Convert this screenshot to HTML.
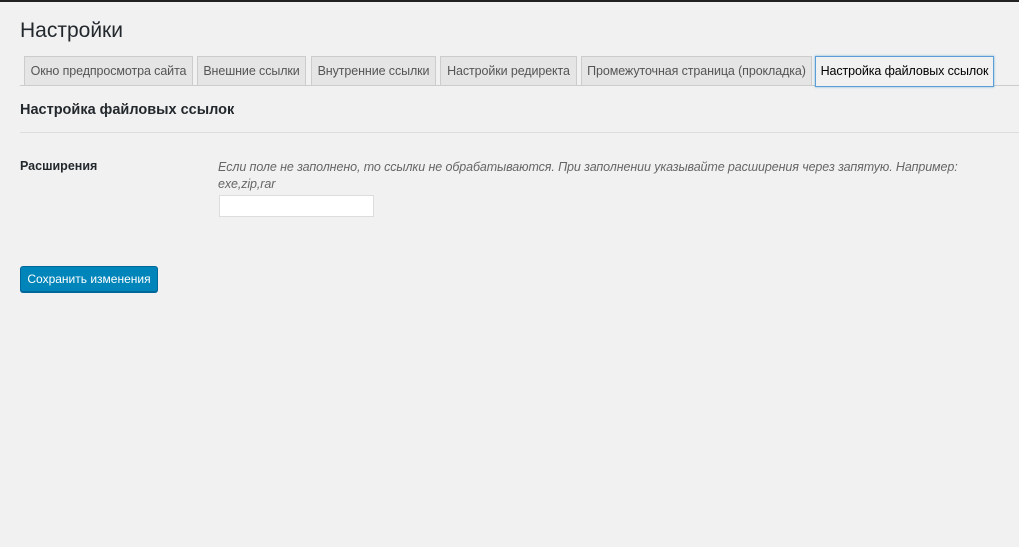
<!DOCTYPE html>
<html><head><meta charset="utf-8"><style>
body{margin:0;width:1019px;height:547px;background:#f1f1f1;font-family:"Liberation Sans",sans-serif;color:#23282d;overflow:hidden;position:relative;border-top:2px solid #222;box-sizing:border-box}
.a{position:absolute;white-space:nowrap}
h1{position:absolute;left:20px;top:17px;margin:0;font-weight:400;font-size:21px;color:#23282d}
.tab{position:absolute;top:54px;height:29px;background:#e5e5e5;border:1px solid #ccc;border-bottom:none;font-size:12.5px;color:#555;text-align:center;line-height:28px;box-sizing:border-box;white-space:nowrap;overflow:hidden;letter-spacing:-0.1px}
.tab.act{background:#f1f1f1;color:#000;border:1px solid #5b9dd9;height:31px;box-shadow:0 0 2px rgba(30,140,190,.6)}
.line{position:absolute;left:20px;right:0;height:1px;background:#ddd}
</style></head><body>
<h1>Настройки</h1>
<div class="tab" style="left:24px;width:169px">Окно предпросмотра сайта</div>
<div class="tab" style="left:197px;width:109px">Внешние ссылки</div>
<div class="tab" style="left:311px;width:125px">Внутренние ссылки</div>
<div class="tab" style="left:440px;width:137px">Настройки редиректа</div>
<div class="tab" style="left:581px;width:231px">Промежуточная страница (прокладка)</div>
<div class="line" style="top:83px;background:#ccc"></div>
<div class="tab act" style="left:815px;width:179px">Настройка файловых ссылок</div>
<div class="a" style="left:20px;top:100px;font-size:14.5px;font-weight:600">Настройка файловых ссылок</div>
<div class="line" style="top:130px"></div>
<div class="a" style="left:20px;top:157px;font-size:12.5px;font-weight:600">Расширения</div>
<div class="a" style="left:218px;top:157px;font-size:12.5px;font-style:italic;color:#666;line-height:17px;letter-spacing:-0.1px">Если поле не заполнено, то ссылки не обрабатываются. При заполнении указывайте расширения через запятую. Например:<br>exe,zip,rar</div>
<div class="a" style="left:219px;top:193px;width:155px;height:22px;background:#fff;border:1px solid #ddd;box-sizing:border-box"></div>
<div class="a" style="left:20px;top:264px;width:138px;height:26px;background:#0085ba;border:1px solid #006799;border-radius:3px;box-sizing:border-box;color:#fff;font-size:12px;line-height:24px;text-align:center;box-shadow:0 1px 0 #006799">Сохранить изменения</div>
</body></html>
